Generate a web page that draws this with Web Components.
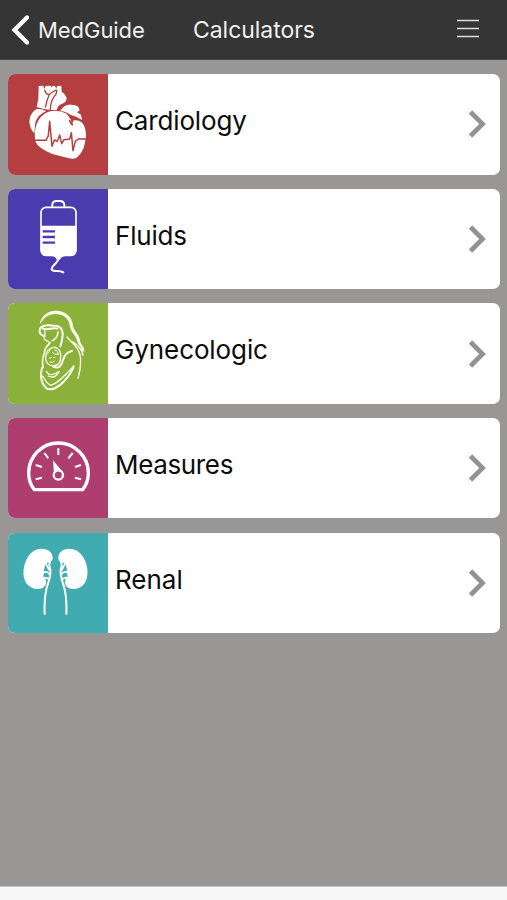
<!DOCTYPE html>
<html lang="en">
<head>
<meta charset="utf-8">
<title>Calculators</title>
<style>
html,body{margin:0;height:100%}
body{font-family:Inter,"Liberation Sans",sans-serif;background:#999696;overflow:hidden}
</style>
</head>
<body>
<med-app>
  <nav-bar slot="header"><span slot="back">MedGuide</span><span slot="title">Calculators</span></nav-bar>
  <calc-card style="--tile:#b43e40;--ls:-.15px">
    <svg slot="icon" viewBox="24 25 300 300"><g fill="#fff">
      <path d="M116 61L130 60 132 71 137 61 151 60 155 65 159 60 166 62 168 70 172 61 184 60 185 78Q198 87 200 98 200 110 185 115 174 118 170 133L153 133Q132 131 110 124L115 100Z"/>
      <path d="M109 130Q128 128 138 137 115 146 106 170L103 203Q91 192 88 169 88 145 109 130Z"/>
      <path d="M181 135Q195 115 213 117 228 117 235 123L239 134 231 140 243 147 246 163Q229 151 212 148 202 139 181 135Z"/>
      <path d="M145 138Q176 131 200 144L213 162 215 178 221 164Q239 162 249 174 258 188 258 211 254 257 233 273 225 282 207 278L157 265Q115 248 107 229 100 201 111 173 120 149 145 138Z"/></g>
      <g fill="none" stroke="#b43e40" stroke-width="4" stroke-linejoin="round"><path d="M134 72Q136 86 147 87Q157 79 168 73M148 86Q140 105 136 126M169 72Q172 84 163 92 151 107 151 133"/><path d="M105 224H138L145 210 149 167 156 242 163 223 172 227 179 208 185 234 192 222 209 220 214 201 219 255 226 227 235 220H259" stroke-width="4.5"/><path d="M208 162Q211 171 218 179" stroke-width="5"/></g>
    </svg>Cardiology</calc-card>
  <calc-card style="--tile:#4a3caf;--ls:-.2px">
    <svg slot="icon" viewBox="24 21 300 300"><g fill="none" stroke="#fff" stroke-linecap="round">
      <path d="M157 73V68Q158 57 169 57H180Q191 57 193 68V73" stroke-width="6"/>
      <rect x="123" y="76" width="105" height="144" rx="15" stroke-width="5"/></g>
      <path fill="#fff" d="M123 131H229V205Q229 222 213 222H195Q185 223 179 233H170Q166 222 154 222H138Q122 222 122 205Z"/>
      <path d="M128 148H165M128 165H165M128 182H165" stroke="#4a3caf" stroke-width="7"/>
      <path d="M175 229C176 242 154 251 155 262C158 271 179 263 190 271" fill="none" stroke="#fff" stroke-width="6" stroke-linecap="round"/>
    </svg>Fluids</calc-card>
  <calc-card style="--tile:#8bb13b;--ls:-.1px">
    <svg slot="icon" viewBox="24 20 300 300"><g fill="none" stroke="#fbffed" stroke-width="6" stroke-linecap="round" stroke-linejoin="round">
      <path fill="#fbffed" stroke-width="2" d="M121 80C126 57 146 44 168 44C196 45 215 61 218 88C219 103 239 115 239 134C241 145 252 150 252 165L247 163C244 149 234 146 233 135C231 119 214 109 211 91C208 65 192 53 167 52C147 52 133 61 121 80Z"/>
      <path d="M120 96C132 82 149 87 162 88C175 87 185 93 188 109C189 125 185 137 181 150"/>
      <path d="M128 96C143 105 154 91 172 97M120 98C116 108 122 117 134 120"/>
      <path d="M134 103C138 114 131 119 133 128C136 135 146 132 149 139" stroke-width="4"/>
      <path d="M174 107C173 119 169 127 157 133M150 139C142 149 132 157 133 172C125 186 127 201 129 214" stroke-width="5"/>
      <path d="M138 178C133 197 148 211 162 208C177 208 183 194 182 177C183 161 168 149 158 154C146 157 138 167 138 178" stroke-width="4"/>
      <path d="M142 173Q149 165 151 158M157 168Q161 176 174 174M164 161Q175 163 175 175M149 185L154 184M150 197Q157 202 163 195M161 184L165 184" stroke-width="3"/>
      <path d="M216 164C199 167 192 178 188 193C183 212 174 217 160 211M126 214C119 240 126 262 137 274C152 287 177 272 193 254C207 239 216 227 221 210"/>
      <path d="M127 239C135 248 139 263 153 267C173 262 191 240 220 211M139 225C146 240 164 236 178 225C171 241 158 246 145 239" stroke-width="4"/>
      <path d="M201 122C217 141 243 158 242 190Q242 221 234 246M219 136Q249 159 249 177" stroke-width="4"/></g>
    </svg>Gynecologic</calc-card>
  <calc-card style="--tile:#ae3d70;--ls:-.35px">
    <svg slot="icon" viewBox="24 22 300 300"><g fill="none" stroke="#fff">
      <path stroke-width="10" stroke-linejoin="round" d="M103 237Q86 216 86 187C86 137 126 97 175 97S265 137 265 187Q265 216 248 237Z"/>
      <path stroke-width="6" d="M175 113V133M133 127L145 143M218 127L205 143M107 163L126 169M243 163L225 169M107 206L126 201M243 206L225 201"/>
      <circle cx="175" cy="193" r="14" stroke-width="7"/></g>
      <path fill="#fff" d="M159 149L188 183 174 181 162 190Z"/>
    </svg>Measures</calc-card>
  <calc-card style="--tile:#40abb0">
    <svg slot="icon" viewBox="24 20 300 300">
      <g id="kidney"><path fill="#fff" d="M125 67C145 67 159 79 158 96C158 105 150 109 140 110C130 123 133 138 130 151C142 160 141 178 127 185C113 192 91 188 79 171C66 151 68 118 83 93C94 75 109 67 125 67Z"/>
      <path fill="none" stroke="#fff" stroke-width="6" d="M151 105Q145 113 151 130C153 157 143 169 139 189Q132 222 134 265"/>
      <path fill="none" stroke="#fff" stroke-width="5" d="M137 110L148 133M130 139Q144 132 150 148M131 154Q143 153 148 161"/></g>
      <use href="#kidney" transform="translate(333 0) scale(-1 1)"/>
    </svg>Renal</calc-card>
</med-app>
<script>
const define=(name,html)=>customElements.define(name,class extends HTMLElement{
  constructor(){super();this.attachShadow({mode:'open'}).innerHTML=html;}
});
define('nav-bar',`<style>
:host{display:grid;grid-template-columns:193px 1fr auto;align-items:center;height:60px;box-sizing:border-box;padding:1px 27px 0 0;background:#353535;color:#f0f0f0;font-size:23px;line-height:28px;border-bottom:1px solid #484848}
.back{display:flex;align-items:center;gap:9px;padding-left:11px}
.chevron{width:18px;height:30px}.menu{width:24px;height:20px;display:block;margin-top:-4px}
.back slot{display:block;font-size:22px;letter-spacing:-.05px}.title{letter-spacing:-.05px}
</style><div class="back"><svg class="chevron" viewBox="0 0 18 30"><path d="M16 2.5L3.5 15 16 27.5" fill="none" stroke="#fff" stroke-width="4.3" stroke-linecap="round"/></svg><slot name="back"></slot></div>
<div class="title"><slot name="title"></slot></div>
<svg class="menu" viewBox="0 0 24 20"><path d="M1 2.5H23M1 10.5H23M1 18.5H23" stroke="#ddd" stroke-width="1.7"/></svg>`);
define('calc-card',`<style>
:host{display:flex;height:100.4px;border-radius:7px;overflow:hidden;background:#fff;color:#0c0c0c;font-size:26px;line-height:32px}
.tile{width:100px;flex:none;background:var(--tile)}
::slotted(svg){display:block;width:100px;height:100px}
.label{flex:1;padding:31px 0 0 7px;letter-spacing:var(--ls,0)}
.next{width:20px;height:32px;margin:34.3px 13px 0 0}
</style><div class="tile"><slot name="icon"></slot></div><div class="label"><slot></slot></div>
<svg class="next" viewBox="0 0 20 32"><path d="M3.5 4L15.5 16 3.5 28" fill="none" stroke="#929292" stroke-width="4.7"/></svg>`);
define('med-app',`<style>
:host{display:flex;flex-direction:column;height:900px;background:#999696}
main{flex:1;display:flex;flex-direction:column;gap:14.2px;padding:14.2px 7.5px 0 8px}
footer{height:14px;background:#f7f7f7;border-top:1px solid #c5c3c3;box-sizing:border-box}
</style><slot name="header"></slot><main><slot></slot></main><footer></footer>`);
</script>
</body>
</html>
